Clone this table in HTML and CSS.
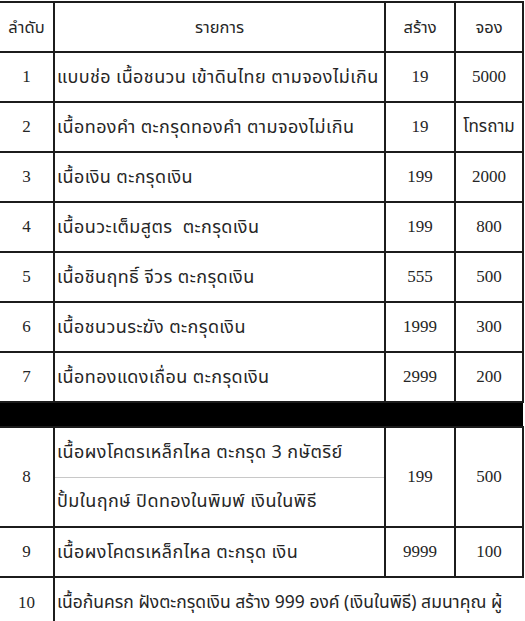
FILE: index.html
```html
<!DOCTYPE html>
<html lang="th">
<head>
<meta charset="utf-8">
<link rel="stylesheet" href="styles.css">
</head>
<body>
<table class="sheet">
  <colgroup>
    <col class="c-no">
    <col class="c-item">
    <col class="c-make">
    <col class="c-book">
  </colgroup>
  <tr class="row head">
    <td class="cell no">ลำดับ</td>
    <td class="cell center">รายการ</td>
    <td class="cell center">สร้าง</td>
    <td class="cell center last">จอง</td>
  </tr>
  <tr class="row">
    <td class="cell no num">1</td>
    <td class="cell item">แบบช่อ เนื้อชนวน เข้าดินไทย ตามจองไม่เกิน</td>
    <td class="cell center num">19</td>
    <td class="cell center num last">5000</td>
  </tr>
  <tr class="row">
    <td class="cell no num">2</td>
    <td class="cell item">เนื้อทองคำ ตะกรุดทองคำ ตามจองไม่เกิน</td>
    <td class="cell center num">19</td>
    <td class="cell center thai last">โทรถาม</td>
  </tr>
  <tr class="row">
    <td class="cell no num">3</td>
    <td class="cell item">เนื้อเงิน ตะกรุดเงิน</td>
    <td class="cell center num">199</td>
    <td class="cell center num last">2000</td>
  </tr>
  <tr class="row">
    <td class="cell no num">4</td>
    <td class="cell item">เนื้อนวะเต็มสูตร&nbsp; ตะกรุดเงิน</td>
    <td class="cell center num">199</td>
    <td class="cell center num last">800</td>
  </tr>
  <tr class="row">
    <td class="cell no num">5</td>
    <td class="cell item">เนื้อชินฤทธิ์ จีวร ตะกรุดเงิน</td>
    <td class="cell center num">555</td>
    <td class="cell center num last">500</td>
  </tr>
  <tr class="row">
    <td class="cell no num">6</td>
    <td class="cell item">เนื้อชนวนระฆัง ตะกรุดเงิน</td>
    <td class="cell center num">1999</td>
    <td class="cell center num last">300</td>
  </tr>
  <tr class="row">
    <td class="cell no num">7</td>
    <td class="cell item">เนื้อทองแดงเถื่อน ตะกรุดเงิน</td>
    <td class="cell center num">2999</td>
    <td class="cell center num last">200</td>
  </tr>
  <tr class="bar">
    <td class="bar-cell" colspan="4"></td>
  </tr>
  <tr class="row sub-top">
    <td class="cell no num" rowspan="2">8</td>
    <td class="cell item split">เนื้อผงโคตรเหล็กไหล ตะกรุด 3 กษัตริย์</td>
    <td class="cell center num" rowspan="2">199</td>
    <td class="cell center num last" rowspan="2">500</td>
  </tr>
  <tr class="row sub-bottom">
    <td class="cell item">ปั้มในฤกษ์ ปิดทองในพิมพ์ เงินในพิธี</td>
  </tr>
  <tr class="row">
    <td class="cell no num">9</td>
    <td class="cell item">เนื้อผงโคตรเหล็กไหล ตะกรุด เงิน</td>
    <td class="cell center num">9999</td>
    <td class="cell center num last">100</td>
  </tr>
  <tr class="row tail">
    <td class="cell no num">10</td>
    <td class="cell item wide" colspan="3"><span class="overflow">เนื้อก้นครก ฝังตะกรุดเงิน สร้าง 999 องค์ (เงินในพิธี) สมนาคุณ ผู้</span></td>
  </tr>
</table>
</body>
</html>
```
FILE: styles.css
```css
html, body {
  margin: 0;
  padding: 0;
  background: #ffffff;
  overflow: hidden;
}

body {
  padding-top: 1px;
  width: 525px;
  height: 621px;
  font-family: "Tahoma", "Noto Sans Thai", "Loma", "Garuda", "Noto Sans", "DejaVu Sans", sans-serif;
  font-size: 16px;
  color: #262626;
}

.sheet {
  border-collapse: collapse;
  table-layout: fixed;
  width: 523px;
}

.c-no { width: 54px; }
.c-item { width: 331px; }
.c-make { width: 70px; }
.c-book { width: 68px; }

.row {
  height: 50px;
}

.cell {
  border: 2px solid #1c1c1c;
  padding: 0 1px;
  white-space: nowrap;
  overflow: hidden;
  vertical-align: middle;
}

.cell.no {
  border-left: none;
  text-align: center;
}

.center {
  text-align: center;
}

.item {
  text-align: left;
  padding-left: 2px;
  font-size: 18px;
  letter-spacing: 0.4px;
}

.thai {
  font-size: 17px;
}

.num {
  font-family: "Liberation Serif", "DejaVu Serif", serif;
  font-size: 17px;
}

.head .cell {
  height: 47px;
  font-size: 16.5px;
}

.bar .bar-cell {
  height: 23px;
  padding: 0;
  background: #000;
  border: none;
}

.bar {
  height: 23px;
}

.sub-top .split {
  border-bottom: 1px solid #c8c8c8;
}

.sub-bottom .cell {
  border-top: 1px solid #c8c8c8;
}

.tail .cell {
  border-bottom: none;
  height: 46px;
}

.wide {
  border-right: none;
  overflow: hidden;
  letter-spacing: 0;
  font-size: 17.5px;
}

.overflow {
  display: block;
  white-space: nowrap;
}
```
